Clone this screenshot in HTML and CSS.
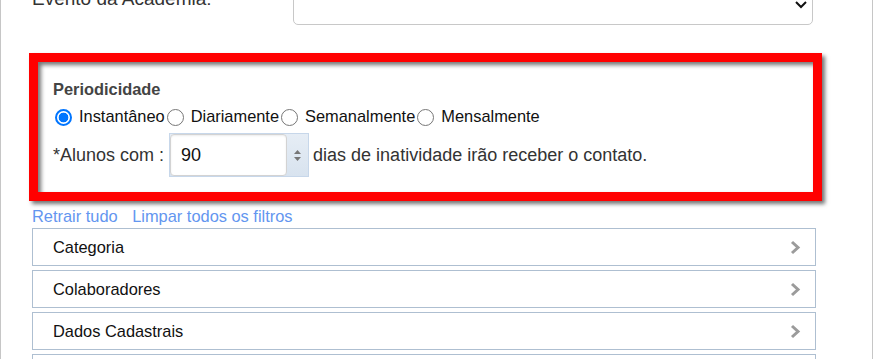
FILE: index.html
```html
<!DOCTYPE html>
<html>
<head>
<meta charset="utf-8">
<title>Periodicidade</title>
<link rel="stylesheet" href="styles.css">
</head>
<body>
<div class="painel">

	<div class="linha-evento">
		<label class="rotulo-evento">Evento da Academia:</label>
		<div class="select">
			<svg width="12" height="8" viewBox="0 0 12 8"><polyline points="1,1 6,6 11,1" fill="none" stroke="#111" stroke-width="2"/></svg>
		</div>
	</div>

	<!-- destaque em vermelho -->
	<div class="periodicidade">
		<div class="titulo">Periodicidade</div>
		<div class="opcoes">
			<label class="opcao"><input type="radio" name="per" checked>Instantâneo</label>
			<label class="opcao"><input type="radio" name="per">Diariamente</label>
			<label class="opcao"><input type="radio" name="per">Semanalmente</label>
			<label class="opcao"><input type="radio" name="per">Mensalmente</label>
		</div>
		<div class="alunos">
			<span>*Alunos com :</span>
			<div class="numero">
				<div class="numero-valor">90</div>
				<div class="spin">
					<svg width="7" height="11" viewBox="0 0 7 11"><polygon points="3.5,0 7,4 0,4" fill="#777"/><polygon points="0,7 7,7 3.5,11" fill="#777"/></svg>
				</div>
			</div>
			<span>dias de inatividade irão receber o contato.</span>
		</div>
	</div>

	<div class="acoes">
		<a href="#">Retrair tudo</a>
		<a href="#">Limpar todos os filtros</a>
	</div>

	<div class="filtro">Categoria <svg width="11" height="15" viewBox="0 0 11 15"><polyline points="2,2 8,7.5 2,13" fill="none" stroke="#9b9b9b" stroke-width="3"/></svg></div>
	<div class="filtro">Colaboradores <svg width="11" height="15" viewBox="0 0 11 15"><polyline points="2,2 8,7.5 2,13" fill="none" stroke="#9b9b9b" stroke-width="3"/></svg></div>
	<div class="filtro">Dados Cadastrais <svg width="11" height="15" viewBox="0 0 11 15"><polyline points="2,2 8,7.5 2,13" fill="none" stroke="#9b9b9b" stroke-width="3"/></svg></div>
	<div class="filtro"></div>

</div>
</body>
</html>
```

FILE: styles.css
```css
body{
	margin: 0;
	background: #fff;
	font-family: "Liberation Sans", Arial, sans-serif;
	color: #222;
	overflow: hidden;
}
.painel{
	display: flow-root;
	width: 873px;
	height: 359px;
	box-sizing: border-box;
	border-left: 1px solid #c6c6c6;
	border-right: 1px solid #c6c6c6;
	padding: 0 56px 0 31px;
	overflow: hidden;
}

/* linha do select */
.linha-evento{
	display: flex;
	margin-top: -16px;
}
.rotulo-evento{
	width: 261px;
	margin-top: 4px;
	font-size: 19px;
	line-height: 22px;
	color: #333;
}
.select{
	width: 520px;
	height: 41px;
	box-sizing: border-box;
	border: 1px solid #c8c8c8;
	border-radius: 5px;
	display: flex;
	align-items: center;
	justify-content: flex-end;
	padding-right: 5px;
}

/* periodicidade */
.periodicidade{
	margin: 28px -6px 0 -3px;
	border: 9px solid #ff0000;
	padding: 18px 15px 15px;
	box-shadow: 3px 3px 4px rgba(0,0,0,.55), inset 3px 3px 4px rgba(0,0,0,.55);
}
.titulo{
	font-size: 16.4px;
	font-weight: bold;
	line-height: 18px;
	color: #444;
}
.opcoes{
	display: flex;
	margin-top: 8px;
	height: 20px;
	align-items: center;
	font-size: 16.4px;
	line-height: 20px;
	color: #111;
}
.opcao{
	display: flex;
	align-items: center;
}
.opcao input{
	appearance: none;
	-webkit-appearance: none;
	width: 17px;
	height: 17px;
	box-sizing: border-box;
	margin: 2px 7px 0 2px;
	border: 1px solid #767676;
	border-radius: 50%;
	background: #fff;
}
.opcao input:checked{
	border: 2px solid #0075ff;
	background: radial-gradient(circle, #0075ff 0 4.5px, #fff 5.2px);
}
.alunos{
	display: flex;
	align-items: center;
	margin-top: 7px;
	font-size: 18px;
	color: #333;
}
.numero{
	display: flex;
	width: 140px;
	height: 44px;
	box-sizing: border-box;
	margin: 0 4px 0 5px;
	border: 1px solid #c7d7ea;
	background: linear-gradient(#e6edf5, #d8e3ef);
}
.numero-valor{
	width: 117px;
	box-sizing: border-box;
	background: #fff;
	border: 1px solid #d3d3d3;
	border-radius: 4px;
	box-shadow: inset 0 1px 2px rgba(0,0,0,.08);
	padding-left: 10px;
	line-height: 40px;
	color: #111;
}
.spin{
	flex: 1;
	display: flex;
	align-items: center;
	justify-content: center;
}

/* links */
.acoes{
	margin-top: 5px;
	font-size: 16.4px;
	line-height: 20px;
}
.acoes a{
	color: #6396f0;
	text-decoration: none;
	margin-right: 10px;
}

/* filtros */
.filtro{
	display: flex;
	align-items: center;
	justify-content: space-between;
	height: 38px;
	box-sizing: border-box;
	margin-top: 2px;
	border: 1px solid #aebfd1;
	padding: 1px 14px 0 20px;
	font-size: 16.4px;
	color: #111;
}
.filtro + .filtro{
	margin-top: 4px;
}
```
